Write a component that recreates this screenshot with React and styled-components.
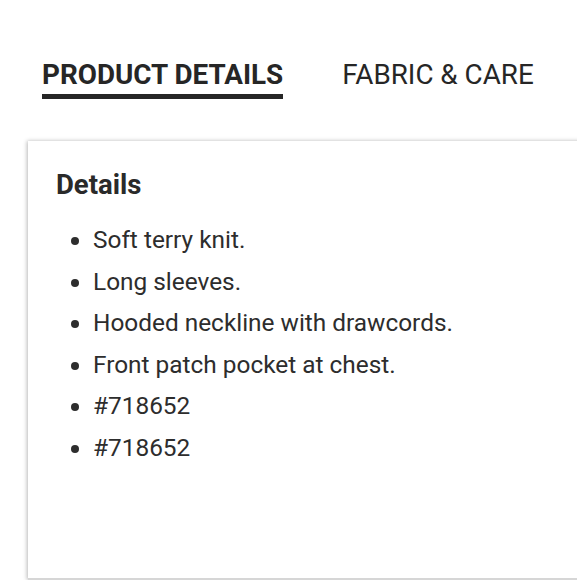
import styled, { createGlobalStyle } from 'styled-components';
import { useState } from 'react';

const GlobalStyle = createGlobalStyle`
    * { box-sizing: border-box; }
    html, body {
        margin: 0;
        padding: 0;
        background: #FFFFFF;
        overflow: hidden;
    }
    body {
        font-family: Roboto, 'Liberation Sans', sans-serif;
        color: #2D2D2D;
    }
`;

const tabs = ['PRODUCT DETAILS', 'FABRIC & CARE'];

const details = [
    'Soft terry knit.',
    'Long sleeves.',
    'Hooded neckline with drawcords.',
    'Front patch pocket at chest.',
    '#718652',
    '#718652',
];

function App() {
    const [active, setActive] = useState(0);

    return (
        <>
            <GlobalStyle />
            <Page>
                <TabBar>
                    {tabs.map((label, index) => (
                        <Tab key={label} $active={active === index} onClick={() => setActive(index)}>
                            {label}
                        </Tab>
                    ))}
                </TabBar>
                <Card>
                    <Heading>Details</Heading>
                    <List>
                        {details.map((item, index) => <Item key={index}>{item}</Item>)}
                    </List>
                </Card>
            </Page>
        </>
    );
}

const Page = styled.div`
    width: 577px;
    height: 580px;
    overflow: hidden;
    display: flex;
    flex-direction: column;
    padding: 60px 0 0 28px;
`;

const TabBar = styled.div`
    display: flex;
    gap: 59px;
    padding-left: 14px;
`;

const Tab = styled.button`
    border: none;
    background: none;
    padding: 0 0 4px 0;
    font-family: Roboto, 'Liberation Sans', sans-serif;
    font-size: 27.8px;
    line-height: 30px;
    font-weight: ${props => props.$active ? 700 : 400};
    color: #262626;
    border-bottom: 5px solid ${props => props.$active ? '#262626' : 'transparent'};
    cursor: pointer;
`;

const Card = styled.div`
    flex: 1;
    margin: 42px -30px 0 0;
    background: #FFFFFF;
    box-shadow: -1px 0 4px rgba(0, 0, 0, 0.28);
    border-bottom: 2px solid #D6D6D6;
    padding: 28px 0 0 28px;
`;

const Heading = styled.h3`
    margin: 0;
    font-size: 27.5px;
    line-height: 32px;
    font-weight: 700;
    color: #2A2A2A;
`;

const List = styled.ul`
    margin: 18px 0 0 0;
    padding-left: 37px;
`;

const Item = styled.li`
    font-size: 24.4px;
    line-height: 41.6px;
    color: #2D2D2D;
`;

export default App;
